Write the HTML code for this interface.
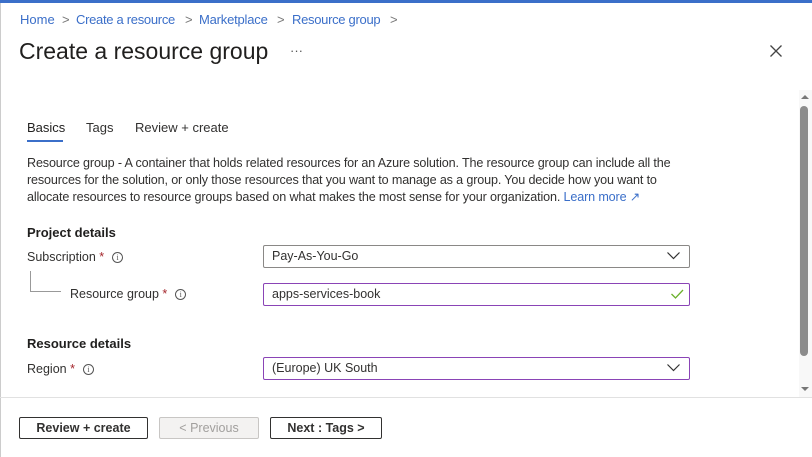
<!DOCTYPE html>
<html><head><meta charset="utf-8"><style>
*{margin:0;padding:0;box-sizing:border-box}
body{width:812px;height:457px;background:#fff;font-family:"Liberation Sans",sans-serif;color:#323130;position:relative;overflow:hidden}
.a{position:absolute;white-space:nowrap}
.bc{color:#3b6fc9;font-size:13px;top:12px}
.sep{color:#777;font-size:13px;top:12px}
.lbl{font-size:12.5px;color:#323130}
.star{color:#a4262c}
.info{display:inline-block;width:11px;height:11px;border:1px solid #555;border-radius:50%;font-size:8px;line-height:9px;text-align:center;color:#555;vertical-align:1px;margin-left:8px;font-family:"Liberation Serif",serif}
.box{position:absolute;left:263px;width:427px;height:23px;border:1px solid #8a8886;border-radius:2px;font-size:12.5px;padding:3px 8px;line-height:15px}
.pur{border:1.5px solid #8a44b6}
.btn{position:absolute;top:417px;height:22px;border:1px solid #323130;border-radius:2px;font-size:12.5px;text-align:center;line-height:20px;font-weight:bold}
</style></head><body>
<div class="a" style="left:0;top:0;width:812px;height:3px;background:#3b6fc9"></div>
<div class="a" style="left:0;top:3px;width:1px;height:454px;background:#ccc"></div>
<div class="a bc" style="left:20px">Home</div><div class="a sep" style="left:62px">&gt;</div>
<div class="a bc" style="left:76px;letter-spacing:-0.3px">Create a resource</div><div class="a sep" style="left:185px">&gt;</div>
<div class="a bc" style="left:199px;letter-spacing:-0.2px">Marketplace</div><div class="a sep" style="left:277px">&gt;</div>
<div class="a bc" style="left:292px;letter-spacing:-0.3px">Resource group</div><div class="a sep" style="left:390px">&gt;</div>
<div class="a" style="left:19px;top:38px;font-size:23px;color:#201f1e">Create a resource group</div>
<div class="a" style="left:290px;top:43px;font-size:13px;color:#555">···</div>
<svg class="a" style="left:770px;top:45px" width="12" height="12"><path d="M0.5 0.5L11.5 11.5M11.5 0.5L0.5 11.5" stroke="#444" stroke-width="1.3"/></svg>
<div class="a" style="left:27px;top:120px;font-size:13px;color:#201f1e">Basics</div>
<div class="a" style="left:27px;top:140px;width:36px;height:2px;background:#3b6fc9"></div>
<div class="a" style="left:86px;top:120px;font-size:13px">Tags</div>
<div class="a" style="left:135px;top:120px;font-size:13px">Review + create</div>
<div class="a" style="left:27px;top:155px;font-size:12.6px;line-height:17px;letter-spacing:-0.15px">Resource group - A container that holds related resources for an Azure solution. The resource group can include all the<br>resources for the solution, or only those resources that you want to manage as a group. You decide how you want to<br>allocate resources to resource groups based on what makes the most sense for your organization. <span style="color:#3b6fc9">Learn more ↗</span></div>
<div class="a" style="left:27px;top:225px;font-size:13px;font-weight:bold;color:#201f1e">Project details</div>
<div class="a lbl" style="left:27px;top:250px">Subscription <span class="star">*</span><span class="info">i</span></div>
<div class="a" style="left:30px;top:271px;width:1px;height:21px;background:#999"></div>
<div class="a" style="left:30px;top:291px;width:31px;height:1px;background:#999"></div>
<div class="a lbl" style="left:70px;top:287px">Resource group <span class="star">*</span><span class="info">i</span></div>
<div class="box" style="top:245px">Pay-As-You-Go</div>
<svg class="a" style="left:667px;top:252px" width="13" height="8"><path d="M0.5 0.5L6.5 6.5L12.5 0.5" stroke="#333" fill="none" stroke-width="1.2"/></svg>
<div class="box pur" style="top:283px">apps-services-book</div>
<svg class="a" style="left:671px;top:289px" width="13" height="10"><path d="M0.5 5L4.5 9L12 1" stroke="#6bb12c" fill="none" stroke-width="1.3"/></svg>
<div class="a" style="left:27px;top:336px;font-size:13px;font-weight:bold;color:#201f1e">Resource details</div>
<div class="a lbl" style="left:27px;top:362px">Region <span class="star">*</span><span class="info">i</span></div>
<div class="box pur" style="top:357px">(Europe) UK South</div>
<svg class="a" style="left:667px;top:364px" width="13" height="8"><path d="M0.5 0.5L6.5 6.5L12.5 0.5" stroke="#333" fill="none" stroke-width="1.2"/></svg>
<div class="a" style="left:799px;top:90px;width:13px;height:307px;background:#f8f8f8"></div>
<svg class="a" style="left:799px;top:93px" width="12" height="8"><path d="M2 6L6 2L10 6Z" fill="#777"/></svg>
<div class="a" style="left:800px;top:106px;width:8px;height:250px;background:#8c8c8c;border-radius:4px"></div>
<svg class="a" style="left:799px;top:385px" width="12" height="8"><path d="M2 2L6 6L10 2Z" fill="#777"/></svg>
<div class="a" style="left:0;top:397px;width:812px;height:1px;background:#e1e1e1"></div>
<div class="btn" style="left:19px;width:129px">Review + create</div>
<div class="btn" style="left:159px;width:100px;border-color:#c8c6c4;background:#f3f2f1;color:#a19f9d;font-weight:normal">&lt; Previous</div>
<div class="btn" style="left:270px;width:112px">Next : Tags &gt;</div>
</body></html>
